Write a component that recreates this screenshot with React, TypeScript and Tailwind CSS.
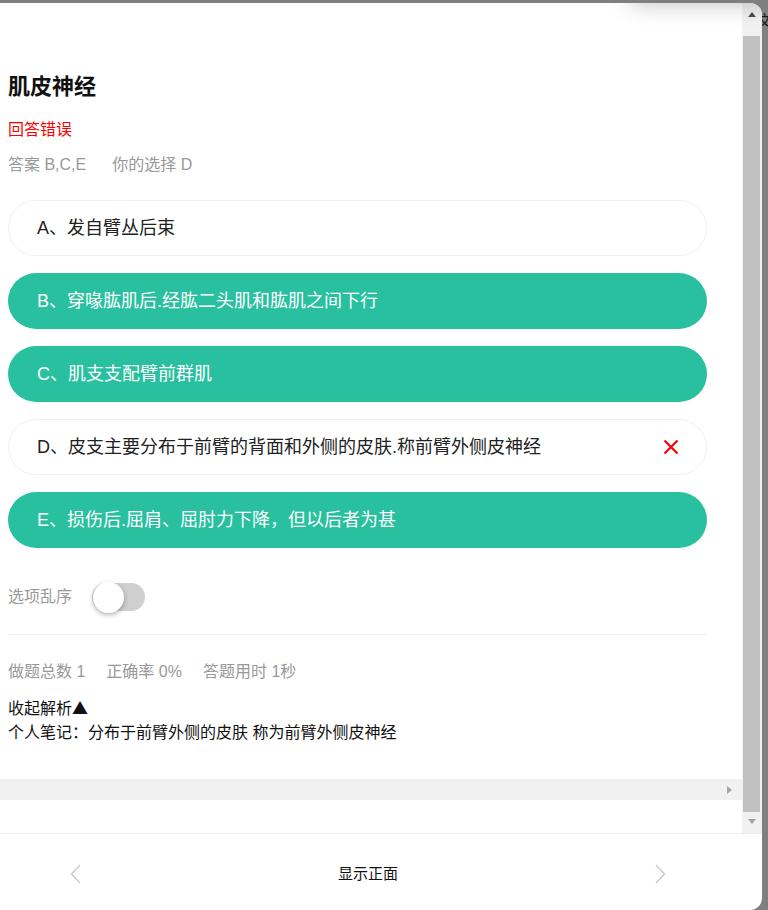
import React from 'react'

const font = { fontFamily: '"Liberation Sans", "Noto Sans CJK SC", sans-serif' }
const cjk = { fontFamily: '"Noto Sans CJK SC", sans-serif' }

type Opt = { label: string; correct: boolean; wrong?: boolean }

const options: Opt[] = [
  { label: 'A、发自臂丛后束', correct: false },
  { label: 'B、穿喙肱肌后.经肱二头肌和肱肌之间下行', correct: true },
  { label: 'C、肌支支配臂前群肌', correct: true },
  { label: 'D、皮支主要分布于前臂的背面和外侧的皮肤.称前臂外侧皮神经', correct: false, wrong: true },
  { label: 'E、损伤后.屈肩、屈肘力下降，但以后者为甚', correct: true },
]

const CrossIcon = () => (
  <svg width="18" height="18" viewBox="0 0 18 18" fill="none">
    <path d="M2.5 2.5 L15.5 15.5 M15.5 2.5 L2.5 15.5" stroke="#ff0000" strokeWidth="2.2" />
  </svg>
)

const Chevron = ({ dir }: { dir: 'left' | 'right' }) => (
  <svg width="11" height="20" viewBox="0 0 11 20" fill="none">
    <path
      d={dir === 'left' ? 'M10 1 L1.5 10 L10 19' : 'M1 1 L9.5 10 L1 19'}
      stroke="#c9c9c9"
      strokeWidth="1.4"
    />
  </svg>
)

function OptionRow({ opt }: { opt: Opt }) {
  if (opt.correct) {
    return (
      <div className="h-[56px] rounded-full bg-[#29c0a0] flex items-center pl-[29px] pr-7 text-white text-[18px]">
        {opt.label}
      </div>
    )
  }
  return (
    <div className="h-[56px] rounded-full border border-[#f0f0f0] bg-white flex items-center pl-[28px] pr-[26px] text-[#222] text-[18px]">
      <span className="flex-1">{opt.label}</span>
      {opt.wrong && <CrossIcon />}
    </div>
  )
}

function VScrollbar() {
  return (
    <div className="w-[20px] bg-[#f1f1f1] flex flex-col items-center">
      <div className="h-[33px] w-full flex justify-center pt-[9px]">
        <div className="w-0 h-0 border-l-[4.5px] border-r-[4.5px] border-b-[5px] border-l-transparent border-r-transparent border-b-[#505050]" />
      </div>
      <div className="flex-1 w-[17px] ml-[-1px] bg-[#c1c1c1]" />
      <div className="h-[21px] w-full flex justify-center pt-[7px]">
        <div className="w-0 h-0 border-l-[4.5px] border-r-[4.5px] border-t-[5px] border-l-transparent border-r-transparent border-t-[#a3a3a3]" />
      </div>
    </div>
  )
}

export default function App() {
  return (
    <div className="relative w-[768px] h-[910px] bg-[#7f7f7f] overflow-hidden pt-[3px]" style={font}>
      <span className="absolute left-[757px] top-[11px] text-[15px] leading-[20px] text-[#1a1a1a]">文</span>
      <div className="relative z-10 w-[762px] h-[907px] bg-white rounded-tr-[12px] rounded-br-[12px] overflow-hidden flex flex-col">
        <div className="absolute top-[-30px] left-[630px] w-[150px] h-[30px] bg-white shadow-[0_2px_22px_rgba(0,0,0,0.22)]" />

        <div className="flex h-[830px]">
          <div className="flex-1 flex flex-col">
            <div className="flex-1 pl-[8px] pr-[35px] pt-[69px]">
              <h1 className="h-[30px] leading-[30px] text-[22px] font-bold text-[#111]">肌皮神经</h1>
              <div className="mt-[16px] h-[24px] leading-[24px] text-[16px] text-[#ff0000]">回答错误</div>
              <div className="mt-[11px] h-[24px] leading-[24px] text-[16px] text-[#999] flex">
                <span>答案 B,C,E</span>
                <span className="ml-[26px]">你的选择 D</span>
              </div>

              <div className="mt-[23px] flex flex-col gap-[17px]">
                {options.map(o => (
                  <OptionRow key={o.label} opt={o} />
                ))}
              </div>

              <div className="mt-[34px] h-[30px] flex items-center">
                <span className="text-[16px] text-[#999]">选项乱序</span>
                <div className="relative ml-[20px] w-[53px] h-[28px] rounded-full bg-[#cfcfcf]">
                  <div className="absolute left-[1px] top-[-1px] w-[31px] h-[31px] rounded-full bg-white shadow-[0_2px_5px_rgba(0,0,0,0.3)]" />
                </div>
              </div>

              <div className="mt-[22px] h-px bg-[#eeeeee]" />

              <div className="mt-[25px] h-[24px] leading-[24px] text-[16px] text-[#999] flex gap-[21px]">
                <span>做题总数 1</span>
                <span>正确率 0%</span>
                <span>答题用时 1秒</span>
              </div>

              <div className="mt-[10px] h-[26px] leading-[26px] text-[16px] text-[#111]">
                收起解析<span style={cjk}>▲</span>
              </div>
              <div className="h-[26px] leading-[26px] text-[16px] text-[#111]">
                个人笔记：分布于前臂外侧的皮肤 称为前臂外侧皮神经
              </div>
            </div>

            <div className="h-[21px] bg-[#f1f1f1] flex items-center justify-end pr-[10px]">
              <div className="w-0 h-0 border-t-[4.5px] border-b-[4.5px] border-l-[5px] border-t-transparent border-b-transparent border-l-[#a3a3a3]" />
            </div>
            <div className="h-[33px]" />
          </div>
          <VScrollbar />
        </div>

        <div className="flex-1 border-t border-[#eeeeee] flex items-center pl-[70px] pr-[96px] pt-[4px]">
          <Chevron dir="left" />
          <div className="flex-1 text-center text-[15px] text-[#111]">显示正面</div>
          <Chevron dir="right" />
        </div>
      </div>
    </div>
  )
}
